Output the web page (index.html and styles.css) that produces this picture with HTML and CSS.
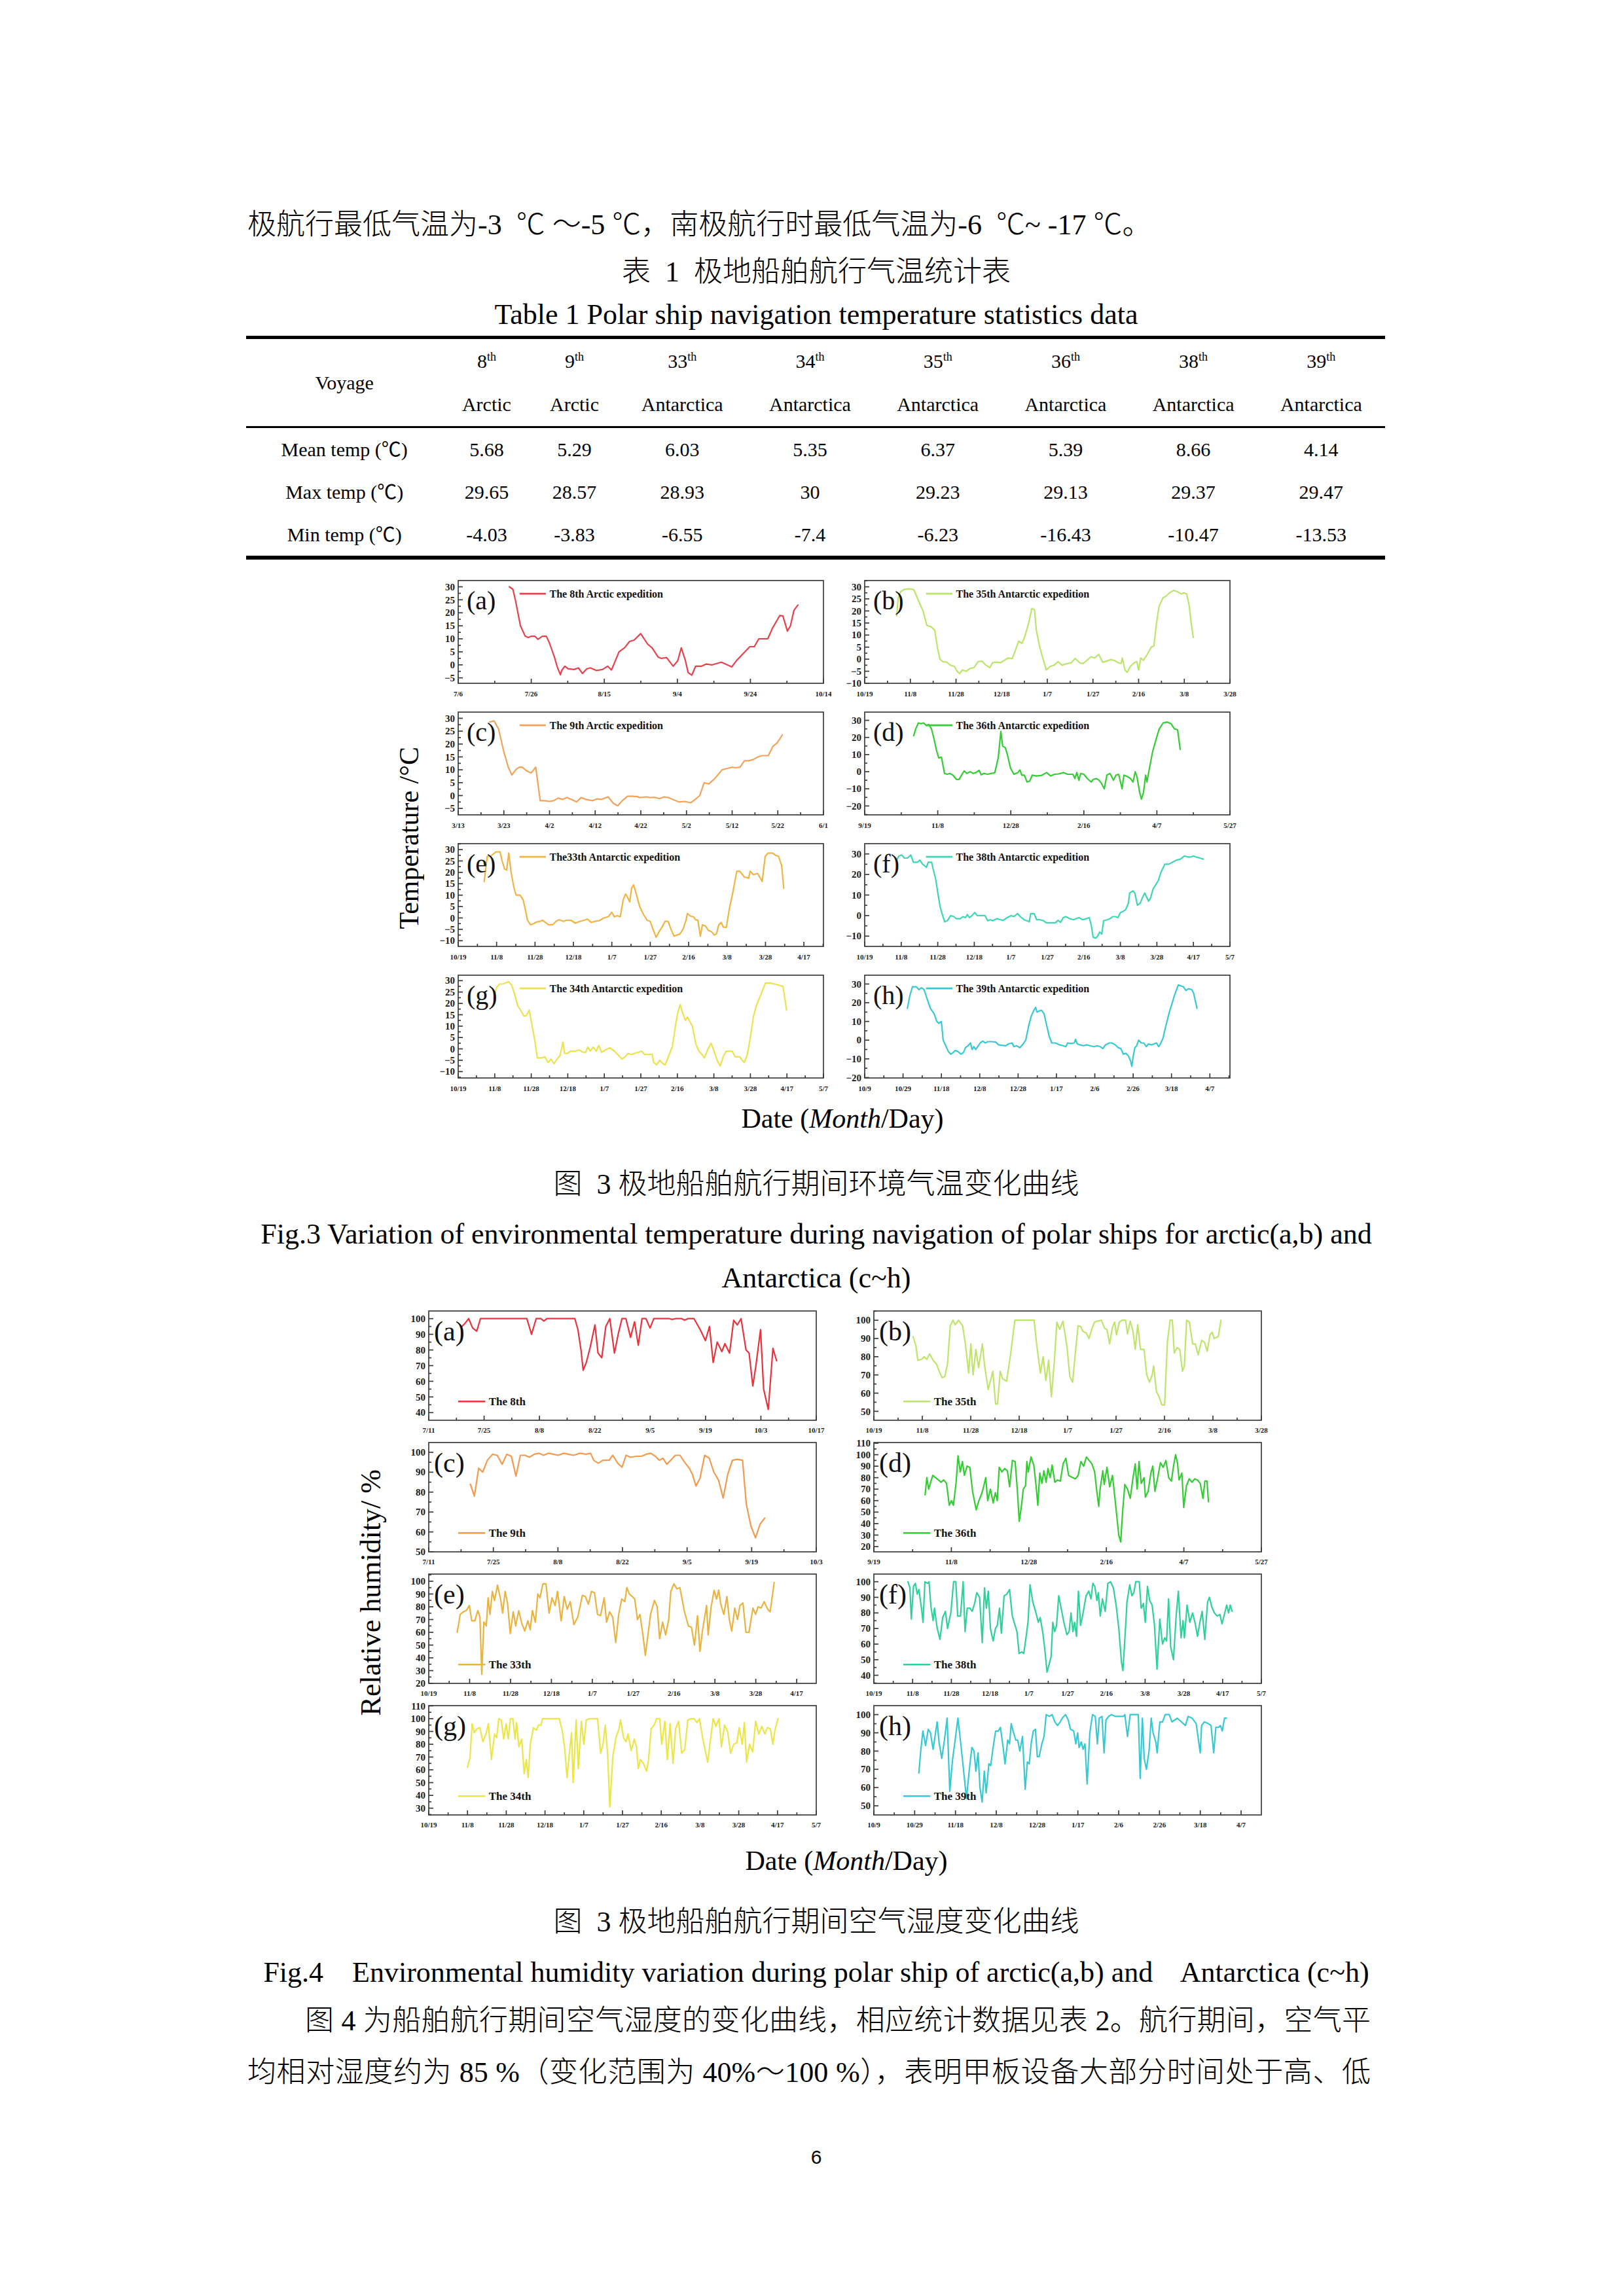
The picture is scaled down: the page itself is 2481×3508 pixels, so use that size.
FILE: index.html
```html
<!DOCTYPE html>
<html lang="zh-CN">
<head>
<meta charset="utf-8">
<title>极地船舶航行气温与湿度</title>
<link rel="stylesheet" href="styles.css">
</head>
<body>
<div class="page">
  <div class="col">
    <p class="line1">极航行最低气温为-3&nbsp;&nbsp;℃ ～-5 ℃，南极航行时最低气温为-6&nbsp;&nbsp;℃~ -17 ℃。</p>
    <p class="tbl-cn">表&nbsp;&nbsp;1&nbsp;&nbsp;极地船舶航行气温统计表</p>
    <p class="tbl-en">Table 1 Polar ship navigation temperature statistics data</p>

    <table class="stats">
      <colgroup>
        <col class="c0"><col class="cs"><col class="cs">
        <col class="cw"><col class="cw"><col class="cw"><col class="cw"><col class="cw"><col class="cw">
      </colgroup>
      <thead>
        <tr class="hr1">
          <th rowspan="2" class="voy">Voyage</th>
          <th>8<sup>th</sup></th><th>9<sup>th</sup></th><th>33<sup>th</sup></th><th>34<sup>th</sup></th>
          <th>35<sup>th</sup></th><th>36<sup>th</sup></th><th>38<sup>th</sup></th><th>39<sup>th</sup></th>
        </tr>
        <tr class="hr2">
          <th>Arctic</th><th>Arctic</th><th>Antarctica</th><th>Antarctica</th>
          <th>Antarctica</th><th>Antarctica</th><th>Antarctica</th><th>Antarctica</th>
        </tr>
      </thead>
      <tbody>
        <tr><td>Mean temp (℃)</td><td>5.68</td><td>5.29</td><td>6.03</td><td>5.35</td><td>6.37</td><td>5.39</td><td>8.66</td><td>4.14</td></tr>
        <tr><td>Max temp (℃)</td><td>29.65</td><td>28.57</td><td>28.93</td><td>30</td><td>29.23</td><td>29.13</td><td>29.37</td><td>29.47</td></tr>
        <tr><td>Min temp (℃)</td><td>-4.03</td><td>-3.83</td><td>-6.55</td><td>-7.4</td><td>-6.23</td><td>-16.43</td><td>-10.47</td><td>-13.53</td></tr>
      </tbody>
    </table>

    <div class="figure fig-temp">
      <div class="ylab"><span>Temperature /°C</span></div>
      <div class="grid grid-t">
        <div class="panel" id="t-a"></div><div class="panel" id="t-b"></div>
        <div class="panel" id="t-c"></div><div class="panel" id="t-d"></div>
        <div class="panel" id="t-e"></div><div class="panel" id="t-f"></div>
        <div class="panel" id="t-g"></div><div class="panel" id="t-h"></div>
      </div>
    </div>
    <p class="xlab xlab-t">Date (<i>Month</i>/Day)</p>
    <p class="fig-cn fig-cn-t">图&nbsp;&nbsp;3 极地船舶航行期间环境气温变化曲线</p>
    <p class="fig-en fig-en-first">Fig.3 Variation of environmental temperature during navigation of polar ships for arctic(a,b) and</p>
    <p class="fig-en">Antarctica (c~h)</p>

    <div class="figure fig-hum">
      <div class="ylab ylab-h"><span>Relative humidity/ %</span></div>
      <div class="grid grid-h">
        <div class="panel" id="h-a"></div><div class="panel" id="h-b"></div>
        <div class="panel" id="h-c"></div><div class="panel" id="h-d"></div>
        <div class="panel" id="h-e"></div><div class="panel" id="h-f"></div>
        <div class="panel" id="h-g"></div><div class="panel" id="h-h"></div>
      </div>
    </div>
    <p class="xlab xlab-h">Date (<i>Month</i>/Day)</p>
    <p class="fig-cn fig-cn-h">图&nbsp;&nbsp;3 极地船舶航行期间空气湿度变化曲线</p>
    <p class="fig-en fig-en-h">Fig.4    Environmental humidity variation during polar ship of arctic(a,b) and    Antarctica (c~h)</p>

    <p class="body-line indent">图 4 为船舶航行期间空气湿度的变化曲线，相应统计数据见表 2。航行期间，空气平</p>
    <p class="body-line">均相对湿度约为 85 %（变化范围为 40%～100 %），表明甲板设备大部分时间处于高、低</p>

    <p class="pagenum">6</p>
  </div>
</div>
<script src="script.js"></script>
</body>
</html>
```

FILE: styles.css
```css
html, body {
  margin: 0;
  padding: 0;
  background: #ffffff;
}

body {
  color: #000000;
  font-family: "Liberation Serif", "Noto Sans CJK SC", serif;
}

.page {
  width: 2481px;
  height: 3508px;
  box-sizing: border-box;
  padding: 309px 0 0 378px;
  overflow: hidden;
}

.col {
  width: 1738px;
}

.line1 {
  margin: 0;
  font-size: 44px;
  line-height: 70px;
  font-weight: 300;
  white-space: nowrap;
}

.tbl-cn {
  margin: 2px 0 0;
  font-size: 44px;
  line-height: 70px;
  font-weight: 300;
  text-align: center;
}

.tbl-en {
  margin: 0;
  font-size: 44px;
  line-height: 60px;
  text-align: center;
  white-space: nowrap;
}

/* ---------- table ---------- */
.stats {
  width: 1740px;
  margin: 2px 0 0 -2px;
  border-collapse: separate;
  border-spacing: 0;
  table-layout: fixed;
  border-top: 5px solid #000;
  border-bottom: 6px solid #000;
  font-size: 30px;
}

.stats .c0 { width: 300px; }
.stats .cs { width: 134px; }
.stats .cw { width: 195px; }

.stats th,
.stats td {
  padding: 0;
  text-align: center;
  font-weight: normal;
  white-space: nowrap;
}

.hr1 th {
  height: 67px;
  line-height: 67px;
}

.hr2 th {
  height: 66px;
  line-height: 66px;
  border-bottom: 3px solid #000;
}

.stats .voy {
  border-bottom: 3px solid #000;
  vertical-align: middle;
  line-height: 40px;
}

.stats tbody td {
  height: 65px;
  line-height: 65px;
}

.stats sup {
  font-size: 18px;
  line-height: 0;
  vertical-align: 11px;
}

/* ---------- figures ---------- */
.figure {
  display: flex;
  justify-content: center;
  align-items: center;
}

.fig-temp {
  margin-top: 24px;
}

.fig-hum {
  margin-top: 9px;
}

.ylab {
  width: 44px;
  display: flex;
  justify-content: center;
  align-items: center;
  margin-right: 3px;
}

.ylab-h {
  margin-right: 16px;
  padding-top: 72px;
}

.ylab span {
  writing-mode: vertical-rl;
  transform: rotate(180deg);
  font-size: 42px;
  line-height: 44px;
  white-space: nowrap;
}

.ylab-h span {
  font-size: 44px;
}

.grid {
  display: grid;
}

.grid-t {
  grid-template-columns: 620px 620px;
  column-gap: 1px;
  row-gap: 1px;
}

.grid-h {
  grid-template-columns: 664px 664px;
  column-gap: 16px;
  row-gap: 0;
}

.grid-t .panel { height: 200px; }
.grid-h .panel { height: 201px; }

.panel svg {
  display: block;
}

.chart text {
  font-family: "Liberation Serif", serif;
  fill: #1a1a1a;
}

.chart .yt { font-weight: bold; font-size: 15px; }
.chart .xt { font-weight: bold; font-size: 11px; }
.chart .legend { font-weight: bold; font-size: 16px; fill: #111; }
.chart .letter { font-size: 40px; fill: #111; }
.grid-h .chart .legend { font-size: 17px; }
.grid-h .chart .letter { font-size: 42px; }

.xlab {
  margin: 2px 0 0;
  font-size: 42px;
  line-height: 50px;
  text-align: center;
  padding-left: 80px;
}

.xlab-h {
  margin-top: 19px;
  padding-left: 92px;
}

.fig-cn {
  margin: 41px 0 0;
  font-size: 44px;
  line-height: 70px;
  font-weight: 300;
  text-align: center;
}

.fig-cn-h {
  margin-top: 34px;
}

.fig-en {
  margin: 0;
  font-size: 44px;
  line-height: 67px;
  text-align: center;
  white-space: pre;
}

.fig-en-first {
  margin-top: 7px;
}

.fig-en-h {
  margin-top: 8px;
}

.body-line {
  width: 1716px;
  margin: 0;
  font-size: 44px;
  line-height: 79px;
  font-weight: 300;
  text-align: justify;
  text-align-last: justify;
}

.fig-en-h + .body-line {
  margin-top: 1px;
}

.indent {
  text-indent: 2em;
}

.pagenum {
  margin: 65px 0 0;
  font-family: "Liberation Sans", sans-serif;
  font-size: 30px;
  line-height: 50px;
  text-align: center;
}
```

FILE: script.js
```js
(function () {
  var NS = 'http://www.w3.org/2000/svg';

  function mk(tag, attrs, text) {
    var e = document.createElementNS(NS, tag);
    for (var k in attrs) e.setAttribute(k, attrs[k]);
    if (text != null) e.textContent = text;
    return e;
  }

  var GT = { W: 620, H: 200, ML: 50, MT: 8, PW: 558, PH: 157, ylf: 15, legY: 0.128, legX: [0.168, 0.24, 0.25], legF: 16, letX: 13, letY: 44, xlDy: 20 };
  var GH = { W: 664, H: 201, ML: 50, MT: 8, PW: 592, PH: 167, ylf: 15, legY: 0.828, legX: [0.076, 0.146, 0.155], legF: 17, letX: 8, letY: 45, xlDy: 19 };

  function fmt(v) { return v < 0 ? '\u2212' + (-v) : String(v); }

  function draw(id, g, c) {
    var host = document.getElementById(id);
    if (!host) return;
    var svg = mk('svg', { width: g.W, height: g.H, viewBox: '0 0 ' + g.W + ' ' + g.H, 'class': 'chart' });
    function X(f) { return g.ML + f * g.PW; }
    function Y(v) { return g.MT + (c.yMax - v) / (c.yMax - c.yMin) * g.PH; }
    var B = g.MT + g.PH;

    var ax = mk('g', { stroke: '#3a3a3a', 'stroke-width': 1.7, fill: 'none' });
    var t = c.yt, step = t[0] - t[1], i, v, f, x, y;
    t.forEach(function (v) { var y = Y(v); ax.appendChild(mk('line', { x1: g.ML, x2: g.ML + 7, y1: y, y2: y })); });
    for (v = t[t.length - 1] - step / 2; v < c.yMax; v += step) {
      if (v > c.yMin) { y = Y(v); ax.appendChild(mk('line', { x1: g.ML, x2: g.ML + 4, y1: y, y2: y })); }
    }
    for (i = 0; i < c.xl.length; i++) {
      x = X(i * c.xs);
      ax.appendChild(mk('line', { x1: x, x2: x, y1: B, y2: B - 7 }));
    }
    for (f = c.xs / 2; f < 1.0001; f += c.xs) {
      x = X(Math.min(f, 1));
      ax.appendChild(mk('line', { x1: x, x2: x, y1: B, y2: B - 4 }));
    }
    ax.appendChild(mk('rect', { x: g.ML, y: g.MT, width: g.PW, height: g.PH }));
    svg.appendChild(ax);

    var lab = mk('g', {});
    t.forEach(function (v) {
      lab.appendChild(mk('text', { x: g.ML - 5, y: (Y(v) + g.ylf * 0.34).toFixed(1), 'text-anchor': 'end', 'class': 'yt' }, fmt(v)));
    });
    c.xl.forEach(function (s, i) {
      lab.appendChild(mk('text', { x: X(i * c.xs).toFixed(1), y: B + g.xlDy, 'text-anchor': 'middle', 'class': 'xt' }, s));
    });
    svg.appendChild(lab);

    var d = c.d, bx = c.bx, pts = [];
    for (i = 0; i < d.length; i += 2) {
      pts.push(X((d[i] - bx[0]) / (bx[1] - bx[0])).toFixed(1) + ',' + Y(d[i + 1]).toFixed(1));
    }
    svg.appendChild(mk('polyline', { points: pts.join(' '), fill: 'none', stroke: c.col, 'stroke-width': 2.2, 'stroke-linejoin': 'round', 'stroke-linecap': 'round' }));

    var ly = g.MT + g.legY * g.PH;
    svg.appendChild(mk('line', { x1: X(g.legX[0]), x2: X(g.legX[1]), y1: ly, y2: ly, stroke: c.col, 'stroke-width': 2.6 }));
    svg.appendChild(mk('text', { x: X(g.legX[2]), y: (ly + g.legF * 0.34).toFixed(1), 'class': 'legend' }, c.leg));
    svg.appendChild(mk('text', { x: g.ML + g.letX, y: g.MT + g.letY, 'class': 'letter' }, c.let));
    host.appendChild(svg);
  }

  var L19_37 = ['10/19', '11/8', '11/28', '12/18', '1/7', '1/27', '2/16', '3/8', '3/28'];
  var L19_57 = ['10/19', '11/8', '11/28', '12/18', '1/7', '1/27', '2/16', '3/8', '3/28', '4/17', '5/7'];
  var L19_417 = ['10/19', '11/8', '11/28', '12/18', '1/7', '1/27', '2/16', '3/8', '3/28', '4/17'];
  var L109 = ['10/9', '10/29', '11/18', '12/8', '12/28', '1/17', '2/6', '2/26', '3/18', '4/7'];
  var T5 = [30, 25, 20, 15, 10, 5, 0, -5];
  var T10 = [30, 25, 20, 15, 10, 5, 0, -5, -10];

  /* ---------------- temperature ---------------- */
  draw('t-a', GT, {
    yMin: -7.1, yMax: 32.4, yt: T5, bx: [255, 1470], xs: 0.2,
    xl: ['7/6', '7/26', '8/15', '9/4', '9/24', '10/14'], col: '#e8414b',
    leg: 'The 8th Arctic expedition', let: '(a)',
    d: [425,30, 437,29, 445,25, 462,15, 478,11, 488,10.5, 498,11, 510,11, 520,9.8, 535,11, 548,11, 558,8.5, 575,3, 585,-1, 595,-3.8, 600,-2, 610,-0.5, 620,-1.5, 640,-1.8, 655,-1.2, 668,-3.3, 683,-1.5, 695,-1.2, 715,-2.2, 735,-1.8, 752,-0.5, 765,-2, 790,5, 808,6.5, 825,9, 840,9.5, 862,12, 885,8, 900,6.5, 920,3, 930,2.5, 948,2.8, 970,-0.5, 985,1.5, 997,6.5, 1010,2, 1020,-3, 1032,-4, 1045,-0.5, 1065,-0.5, 1080,0.3, 1100,0, 1130,1, 1150,0, 1165,-0.8, 1180,1.5, 1200,4, 1225,7, 1240,7, 1255,10, 1270,10, 1285,10, 1300,14, 1325,19, 1335,18.8, 1350,13, 1360,15, 1372,21, 1385,23]
  });

  draw('t-b', GT, {
    yMin: -10, yMax: 32.6, yt: T10, bx: [68, 1460], xs: 0.125,
    xl: L19_37, col: '#bde46a',
    leg: 'The 35th Antarctic expedition', let: '(b)',
    d: [190,18, 195,25, 205,28, 220,29, 240,29.2, 255,28.8, 270,25, 290,20, 305,14, 320,13.5, 335,12, 345,5, 355,0, 365,-1, 380,-1.2, 395,-2.5, 410,-3, 420,-5, 430,-6, 440,-4.5, 455,-5, 470,-3.8, 485,-3.5, 500,-1, 515,-0.8, 530,-2.5, 545,-3.5, 555,-1.5, 570,-1.2, 585,-1.5, 600,-0.5, 615,0.5, 630,0.3, 640,3, 655,7.5, 668,6.5, 680,10, 693,15, 705,21, 715,20.5, 722,12, 735,5, 748,0, 760,-4.5, 775,-3, 790,-2.5, 805,-1, 820,-2.5, 840,-1.8, 855,-1.5, 870,0.3, 888,-1.5, 900,-1.8, 915,-0.5, 930,1, 945,0.5, 960,2, 975,-1.3, 990,-0.8, 1005,-0.2, 1020,-0.5, 1035,-1.5, 1045,-1.8, 1050,0.5, 1060,-4.5, 1068,-5.5, 1080,-3, 1095,-1.5, 1105,-1, 1112,-4.5, 1120,0.5, 1130,-0.5, 1145,2, 1160,5, 1170,5.5, 1180,15, 1190,22, 1205,25.5, 1215,26, 1230,27.5, 1245,28.5, 1260,28, 1275,27, 1285,27.5, 1295,27, 1305,22, 1312,15, 1320,9]
  });

  draw('t-c', GT, {
    yMin: -7.5, yMax: 32.4, yt: T5, bx: [240, 1465], xs: 0.125,
    xl: ['3/13', '3/23', '4/2', '4/12', '4/22', '5/2', '5/12', '5/22', '6/1'], col: '#f3a25a',
    leg: 'The 9th Arctic expedition', let: '(c)',
    d: [345,28.5, 360,29, 375,26, 393,17, 408,11, 420,8, 433,10, 445,11, 455,11, 470,9.5, 485,8.8, 500,11, 515,-2, 530,-2, 545,-2.3, 560,-2, 575,-1, 590,-1.5, 605,-0.8, 620,-1.5, 637,-2.5, 652,-0.8, 668,-1.5, 690,-2, 705,-1.3, 720,-1.5, 743,-0.5, 760,-3, 775,-4, 790,-2, 808,-0.3, 825,-0.3, 840,-0.4, 850,-0.8, 870,-0.5, 885,-0.8, 900,-0.7, 915,-1.2, 930,-0.5, 945,-0.8, 960,-1.5, 980,-2.5, 1000,-2.3, 1020,-2.8, 1035,-1.5, 1050,0, 1065,5, 1080,4.5, 1100,6.5, 1125,10, 1140,10.5, 1158,11, 1170,10.8, 1185,11, 1200,13.5, 1215,13.5, 1230,14, 1245,15, 1260,15.5, 1280,15.5, 1295,19, 1310,20.5, 1327,23.5]
  });

  draw('t-d', GT, {
    yMin: -25.2, yMax: 34.8, yt: [30, 20, 10, 0, -10, -20], bx: [75, 1470], xs: 0.2,
    xl: ['9/19', '11/8', '12/28', '2/16', '4/7', '5/27'], col: '#34cc34',
    leg: 'The 36th Antarctic expedition', let: '(d)',
    d: [262,21, 270,25, 280,28.5, 290,28, 300,28.5, 310,27, 320,27.5, 330,25, 340,19, 350,12, 358,8, 368,8.5, 380,-1, 390,-1.5, 400,-1, 412,-2, 425,-4.5, 435,-4.5, 445,-2, 455,0.5, 465,-1, 478,0, 490,-1, 500,-0.5, 512,0.8, 520,-1.8, 530,-1, 545,-1.5, 560,-1, 572,-0.5, 585,8, 595,23.5, 602,15, 612,14, 620,10, 632,2, 645,-1.5, 660,-0.5, 668,1, 675,-2, 685,-2, 695,-6, 705,-5.5, 715,-2, 730,-2.5, 750,-2.2, 770,-0.5, 785,-2.5, 800,-1.5, 815,-1.3, 835,-0.5, 850,-1.5, 870,-1.5, 878,-4, 885,-0.5, 893,-5, 900,-1, 912,-1.5, 925,-4, 940,-6, 948,-4.5, 960,-4, 970,-5, 980,-7, 990,-10, 1000,-2, 1012,-1, 1025,-5, 1035,-2, 1045,-1.5, 1058,-10, 1065,-2, 1080,-3, 1090,-4, 1100,-6, 1108,0, 1115,-3, 1125,-12, 1132,-16, 1140,-12, 1148,-2, 1153,-6, 1160,0, 1175,12, 1190,20, 1200,25, 1215,28.5, 1230,29, 1245,28, 1258,25, 1270,24.5, 1280,13]
  });

  draw('t-e', GT, {
    yMin: -12.5, yMax: 32.6, yt: T10, bx: [238, 1460], xs: 0.10516,
    xl: L19_417, col: '#f0b444',
    leg: 'The33th Antarctic expedition', let: '(e)',
    d: [325,16, 335,27, 345,27, 355,28, 365,29, 378,29, 385,25, 393,21.5, 400,21, 407,28.5, 415,20, 425,13, 432,10, 445,10, 455,8, 462,4, 470,-1, 480,-3, 490,-2.5, 500,-1.8, 512,-1.5, 520,-1, 530,-2, 540,-3, 555,-3, 565,-1.5, 575,-0.8, 590,-1.5, 600,-1, 615,-1, 630,-2.3, 645,-1.5, 660,-1, 670,-0.5, 683,-2, 695,-1.5, 710,-1.2, 725,0, 740,0.5, 752,2.5, 760,0.5, 770,1, 780,0.5, 790,8, 798,10.5, 805,9, 812,7, 818,13, 825,14.5, 835,10, 845,5, 858,1.5, 870,-1, 880,-1.5, 890,-5, 900,-8.5, 910,-6, 920,-4, 930,-1.5, 940,-1.5, 950,-5, 960,-8, 970,-7.5, 980,-7, 990,-5, 1000,-1, 1005,2, 1015,0.8, 1025,0.5, 1032,-0.8, 1040,-1, 1048,-8, 1055,-3, 1065,-3.5, 1075,-5.5, 1085,-6, 1095,-7.5, 1102,-7, 1110,-3, 1118,-2, 1125,-4, 1135,-4.2, 1145,4, 1155,10, 1170,20.5, 1180,20.5, 1195,18, 1210,17.5, 1215,20.5, 1225,19, 1240,19.5, 1255,16, 1265,27, 1275,28.5, 1290,28.5, 1300,27.5, 1310,27, 1320,23, 1327,13]
  });

  draw('t-f', GT, {
    yMin: -15, yMax: 35, yt: [30, 20, 10, 0, -10], bx: [68, 1470], xs: 0.1,
    xl: L19_57, col: '#3cd6b4',
    leg: 'The 38th Antarctic expedition', let: '(f)',
    d: [190,27, 200,29, 210,29.5, 220,28, 232,28, 245,29.5, 255,26, 270,26, 280,27, 290,25, 300,24, 305,23.5, 312,26, 325,26, 330,23, 340,18, 350,10, 358,4, 365,1, 375,-3, 385,-2.5, 398,0, 410,-0.5, 420,-1.5, 435,-1.5, 445,-0.5, 455,-1, 462,0.5, 470,-1, 480,0, 490,1.5, 500,0, 515,0, 530,0, 540,-2.5, 550,-2, 560,-2.5, 575,-1.5, 590,-2, 600,-2.3, 615,-1, 630,0, 640,-0.5, 655,1, 665,-0.5, 680,-2, 700,-3, 705,1, 718,1, 728,-2, 740,-2, 755,-2.5, 765,-3.5, 780,-3.5, 800,-3.5, 810,-2.3, 820,-3.3, 830,-1, 840,-0.5, 855,-1.5, 870,-2, 880,-1.5, 890,-1, 905,-2, 918,-1.5, 930,-1, 938,-5, 945,-10.5, 955,-11, 962,-10, 970,-8, 978,-9, 985,-2.5, 1000,-2, 1010,-1.5, 1020,-0.5, 1030,-0.5, 1040,-1, 1050,1.5, 1060,2, 1070,3, 1080,6, 1085,11, 1098,12, 1105,11, 1115,5, 1125,6, 1135,9, 1143,11, 1150,9, 1158,7, 1165,8.5, 1175,13, 1185,15, 1195,17, 1205,21, 1220,25, 1235,25, 1250,26, 1265,27, 1280,27.5, 1295,29, 1310,28.5, 1320,28.5, 1330,29, 1340,28.5, 1355,28, 1368,27.5]
  });

  draw('t-g', GT, {
    yMin: -12.8, yMax: 32.4, yt: T10, bx: [253, 1462], xs: 0.1,
    xl: L19_57, col: '#ece24e',
    leg: 'The 34th Antarctic expedition', let: '(g)',
    d: [370,22, 380,27, 390,28.5, 400,28.5, 410,29, 420,29.5, 430,28, 440,24, 450,19, 460,17, 470,14.5, 478,14.5, 488,17, 495,12, 505,5, 515,-4, 530,-4, 540,-3.5, 550,-6, 560,-4.5, 570,-6.5, 580,-4.5, 590,-3, 600,3, 605,-2, 615,-2, 625,-1, 640,-1, 655,-0.5, 665,-1.5, 675,-1.5, 682,0.8, 690,-1, 700,0.8, 710,-1, 718,1.5, 728,-1.5, 740,-0.5, 755,0.5, 770,-1, 785,-3, 795,-4.5, 805,-3.5, 815,-2, 828,-2.5, 840,-1.8, 850,-1.5, 860,-1, 870,-2.5, 885,-2.5, 895,-2.3, 900,-6, 910,-7, 920,-5, 930,-6.5, 938,-7, 950,-3, 962,1, 972,10, 980,16, 988,19.5, 995,16, 1005,12.5, 1012,14, 1020,12, 1028,10, 1040,2, 1050,-1, 1060,-2.5, 1068,-4, 1080,0, 1090,2.5, 1100,-1, 1110,-5, 1120,-7.5, 1130,-3.5, 1140,-1, 1150,-1, 1160,-1, 1170,-3.5, 1185,-3.5, 1190,-4.5, 1200,-6, 1210,-2.5, 1220,5, 1230,14, 1240,19, 1255,24, 1270,29, 1285,29, 1300,28.5, 1315,28, 1328,27.5, 1340,17]
  });

  draw('t-h', GT, {
    yMin: -20.2, yMax: 34.7, yt: [30, 20, 10, 0, -10, -20], bx: [68, 1497], xs: 0.105,
    xl: L109, col: '#36c9d3',
    leg: 'The 39th Antarctic expedition', let: '(h)',
    d: [235,17, 245,24, 255,28.5, 270,28.5, 280,27, 290,28, 300,27, 310,23, 325,17, 340,14, 350,10, 358,9, 368,10, 375,0, 385,-3, 395,-6, 405,-7.5, 415,-6.5, 422,-5.5, 432,-6, 445,-7.5, 455,-6.5, 462,-4, 472,-3, 482,-1.5, 488,-5, 495,-3.5, 502,-5, 510,-3.5, 520,-1.5, 530,-0.5, 540,-1.5, 550,-0.8, 565,-0.8, 580,-1, 592,-2.5, 605,-2.8, 620,-3, 630,-2, 645,-1.5, 652,-3.5, 662,-3, 675,-4, 688,-2, 698,0, 710,8, 720,13, 730,16, 737,17.5, 742,15, 750,15.5, 760,16, 770,14, 780,8, 790,2, 800,-1.5, 815,-1.5, 830,-2.5, 845,-3, 855,-3.5, 862,-1.5, 875,-1.8, 888,-1.5, 893,0.5, 900,-2, 910,-2.5, 925,-3, 935,-2.5, 950,-3, 965,-3.5, 978,-3, 990,-3.5, 1000,-4.5, 1010,-2.5, 1025,-1.5, 1035,-1.5, 1048,-2.5, 1060,-4, 1070,-4.5, 1080,-7.5, 1090,-7, 1100,-8.5, 1108,-11, 1113,-14, 1118,-9, 1125,-4, 1132,-3, 1140,0, 1150,-1.5, 1160,-1.5, 1170,-3.5, 1178,-2, 1190,-2.5, 1200,-2, 1210,-1.5, 1218,-3.5, 1225,-2, 1235,1, 1245,7, 1260,15, 1280,24, 1295,29.5, 1305,29, 1315,28.5, 1325,26.5, 1335,27.5, 1348,27, 1355,25, 1368,17]
  });

  /* ---------------- humidity ---------------- */
  draw('h-a', GH, {
    yMin: 35.1, yMax: 104.9, yt: [100, 90, 80, 70, 60, 50, 40], bx: [243, 1495], xs: 1 / 7,
    xl: ['7/11', '7/25', '8/8', '8/22', '9/5', '9/19', '10/3', '10/17'], col: '#e8333d',
    leg: 'The 8th', let: '(a)',
    d: [350,95, 360,97, 372,100, 385,94, 398,92, 410,100, 420,100, 560,100, 575,90, 590,100, 605,100, 615,98.5, 625,100, 715,100, 725,93, 735,80, 742,67, 752,72, 765,82, 780,96, 790,78, 802,75, 815,95, 828,100, 843,78, 855,90, 867,100, 880,100, 895,88, 908,98, 920,83, 932,100, 945,100, 958,94, 970,100, 1020,100, 1030,99.5, 1040,100, 1060,100, 1070,99, 1080,100, 1100,100, 1120,93, 1137,86, 1150,95, 1162,72, 1175,85, 1190,79, 1200,84, 1215,78, 1228,99, 1240,96, 1252,100, 1268,80, 1278,78, 1290,57, 1300,70, 1315,93, 1325,55, 1340,42, 1355,81, 1367,73]
  });

  draw('h-b', GH, {
    yMin: 45.1, yMax: 105.1, yt: [100, 90, 80, 70, 60, 50], bx: [102, 1512], xs: 0.125,
    xl: L19_37, col: '#bfe46c',
    leg: 'The 35th', let: '(b)',
    d: [245,91, 255,86, 262,78, 275,78.5, 285,80, 295,78.5, 305,81.5, 318,78, 330,76, 340,72, 350,68.5, 360,69, 370,76, 380,97, 390,100, 398,97.5, 410,100, 425,97, 435,87, 447,71, 455,87, 463,70, 473,84, 483,74, 497,87, 505,75, 518,62, 530,69, 535,72, 545,54, 552,54, 562,72, 570,68, 585,66.5, 600,82, 615,100, 625,100, 685,100, 695,86, 708,71, 718,80, 728,67, 738,78, 748,58, 758,76, 768,99, 778,95, 790,99.5, 805,85, 815,69, 825,66, 835,82, 845,97, 855,96.5, 862,94, 875,93, 885,90, 895,95, 905,99, 915,99.5, 930,100, 942,95.5, 950,95, 960,87, 970,96, 978,99, 985,92, 995,99, 1005,100, 1018,100, 1025,92.5, 1035,99.5, 1045,94, 1053,84, 1062,97.5, 1072,84, 1085,84, 1095,70, 1105,66, 1115,70, 1120,75, 1130,61, 1140,58, 1150,53.5, 1160,53.5, 1170,88, 1180,100, 1188,100, 1195,82, 1205,85, 1215,84, 1225,72, 1232,75, 1240,100, 1250,99, 1262,87, 1272,87, 1282,81, 1295,89, 1305,88, 1315,83, 1325,92, 1333,93.5, 1340,90, 1355,91, 1365,100]
  });

  draw('h-c', GH, {
    yMin: 50, yMax: 104.9, yt: [100, 90, 80, 70, 60, 50], bx: [240, 1497], xs: 1 / 6,
    xl: ['7/11', '7/25', '8/8', '8/22', '9/5', '9/19', '10/3'], col: '#f39a4f',
    leg: 'The 9th', let: '(c)',
    d: [375,84, 388,78, 402,92, 415,90, 430,96, 447,99, 462,98.5, 478,94, 493,99, 508,98, 523,88, 537,98.5, 552,98.5, 567,97.5, 582,99, 598,99.5, 612,98.5, 628,99.5, 645,99, 660,98.5, 678,99.5, 693,99, 710,98.5, 730,99.5, 750,99, 765,99.5, 775,96, 790,94.5, 805,96, 825,96, 837,98.5, 853,94.5, 867,92.5, 880,98.5, 895,97.5, 912,98, 930,98, 945,99, 960,99.5, 975,98, 988,96, 1000,97, 1012,94, 1025,96, 1040,98.5, 1055,98.5, 1070,95, 1085,92, 1095,89, 1107,83, 1120,87, 1135,98.5, 1150,97, 1165,90, 1180,86, 1195,77, 1210,89, 1225,96, 1240,96.5, 1258,96, 1270,74, 1285,63, 1300,57, 1315,64, 1330,67]
  });

  draw('h-d', GH, {
    yMin: 15.4, yMax: 110.6, yt: [110, 100, 90, 80, 70, 60, 50, 40, 30, 20], bx: [105, 1518], xs: 0.2,
    xl: ['9/19', '11/8', '12/28', '2/16', '4/7', '5/27'], col: '#33cc33',
    leg: 'The 36th', let: '(d)',
    d: [292,65, 298,80, 305,70, 312,76, 320,82, 330,80, 340,78, 350,76, 360,78, 370,75, 380,56, 388,60, 395,56, 405,76, 412,99, 420,85, 428,94, 435,82, 445,90, 455,89, 465,68, 478,52, 488,60, 498,66, 505,72, 513,80, 520,60, 530,70, 540,58, 548,67, 555,60, 562,89, 572,85, 582,88, 592,86, 600,72, 610,95, 620,94, 628,70, 635,42, 643,55, 650,70, 658,73, 663,94, 668,85, 678,98, 688,91, 697,72, 703,56, 710,84, 718,75, 725,86, 733,76, 740,88, 748,80, 755,91, 765,76, 775,78, 785,77, 795,92, 805,97, 815,82, 830,80, 840,79, 850,82, 860,94, 870,90, 880,98, 890,95, 900,92, 910,85, 918,68, 925,55, 930,70, 940,86, 945,74, 955,89, 965,72, 975,82, 985,60, 998,30, 1005,24, 1012,50, 1020,74, 1030,70, 1040,62, 1050,80, 1058,92, 1065,70, 1072,94, 1080,75, 1090,80, 1095,63, 1105,68, 1115,84, 1122,90, 1130,68, 1140,80, 1150,93, 1160,89, 1170,95, 1180,80, 1190,77, 1197,89, 1205,100, 1212,93, 1218,78, 1228,84, 1235,54, 1245,73, 1255,79, 1265,76, 1275,79, 1285,78, 1295,75, 1305,62, 1312,77, 1320,77, 1325,59]
  });

  draw('h-e', GH, {
    yMin: 20, yMax: 105.6, yt: [100, 90, 80, 70, 60, 50, 40, 30, 20], bx: [218, 1497], xs: 0.1055,
    xl: L19_417, col: '#eab23e',
    leg: 'The 33th', let: '(e)',
    d: [312,60, 322,74, 332,76, 342,77, 352,81, 360,69, 370,69, 380,77, 387,72, 393,27, 400,68, 408,65, 414,87, 420,74, 428,92, 435,85, 445,97, 455,86, 462,75, 470,92, 478,83, 487,59, 497,76, 505,65, 515,77, 525,67, 535,61, 545,69, 553,62, 560,77, 570,68, 578,90, 585,87, 595,98, 605,98, 615,75, 625,87, 635,81, 643,92, 655,69, 665,88, 675,78, 685,84, 697,66, 710,72, 725,89, 735,88, 745,82, 755,92, 765,91, 775,74, 785,73, 797,87, 805,68, 815,76, 825,72, 835,52, 845,74, 855,86, 865,84, 872,95, 880,90, 890,88, 898,86, 907,70, 915,74, 925,58, 933,42, 940,55, 950,74, 963,85, 972,80, 980,55, 990,68, 1000,58, 1010,70, 1017,92, 1027,98, 1037,94, 1047,95, 1055,85, 1062,76, 1075,65, 1085,64, 1095,50, 1105,73, 1113,45, 1122,62, 1135,81, 1140,58, 1150,80, 1160,93, 1168,86, 1175,93, 1182,82, 1192,74, 1202,88, 1210,70, 1218,61, 1228,79, 1237,70, 1245,81, 1255,83, 1265,60, 1275,60, 1288,79, 1297,74, 1305,80, 1315,79, 1325,84, 1337,78, 1345,76, 1358,99]
  });

  draw('h-f', GH, {
    yMin: 34.8, yMax: 104.9, yt: [100, 90, 80, 70, 60, 50, 40], bx: [103, 1522], xs: 0.1,
    xl: L19_57, col: '#2fd09c',
    leg: 'The 38th', let: '(f)',
    d: [228,100, 235,96, 240,76, 248,97, 255,99, 262,92, 268,95, 278,82, 283,74, 290,100, 300,99, 305,100, 312,84, 320,75, 325,83, 335,70, 345,63, 355,77, 365,81, 373,70, 385,80, 395,100, 403,100, 410,78, 420,78, 430,100, 437,68, 445,83, 455,83, 463,81, 472,86, 480,93, 490,90, 500,61, 508,96, 515,83, 522,94, 530,70, 540,62, 548,70, 555,72, 563,83, 570,67, 580,91, 590,92, 600,95, 610,78, 620,72, 627,68, 635,54, 645,55, 652,54, 660,64, 668,75, 675,98, 685,87, 695,81, 705,74, 712,77, 722,67, 730,55, 737,42, 745,47, 752,52, 758,74, 765,68, 772,72, 780,91, 790,82, 800,73, 810,66, 818,68, 825,80, 832,68, 838,74, 845,65, 852,94, 860,72, 868,79, 880,91, 890,94, 898,89, 905,99, 912,97, 920,88, 925,93, 932,78, 940,89, 950,81, 960,99, 970,100, 980,96, 990,85, 1000,70, 1010,48, 1015,43, 1025,72, 1030,87, 1040,98, 1048,91, 1055,93, 1062,100, 1075,100, 1082,83, 1090,86, 1097,74, 1105,97, 1113,88, 1122,85, 1130,73, 1140,44, 1150,76, 1160,60, 1168,64, 1175,62, 1182,89, 1190,58, 1200,50, 1210,78, 1218,94, 1228,64, 1235,75, 1240,64, 1250,85, 1260,74, 1270,80, 1280,73, 1288,65, 1298,75, 1305,81, 1315,63, 1325,87, 1332,90, 1340,84, 1350,80, 1360,78, 1370,79, 1378,73, 1388,80, 1395,85, 1402,80, 1408,85, 1415,81]
  });

  draw('h-g', GH, {
    yMin: 24.7, yMax: 110.2, yt: [110, 100, 90, 80, 70, 60, 50, 40, 30], bx: [233, 1500], xs: 0.1,
    xl: L19_57, col: '#ece548',
    leg: 'The 34th', let: '(g)',
    d: [360,62, 368,70, 375,96, 382,89, 390,92, 400,93, 410,82, 420,88, 428,96, 438,68, 448,88, 455,85, 462,100, 470,99, 478,84, 486,96, 493,84, 500,100, 508,100, 515,84, 520,97, 528,78, 537,84, 545,57, 552,68, 558,54, 565,80, 575,93, 585,91, 592,95, 600,95, 605,100, 660,100, 670,90, 678,76, 685,54, 695,78, 700,89, 705,50, 715,99, 722,61, 732,98, 740,80, 748,99, 758,100, 785,100, 795,73, 803,80, 810,95, 818,72, 825,31, 835,71, 845,85, 855,92, 860,99, 870,85, 878,82, 885,88, 895,75, 905,84, 912,78, 918,61, 925,68, 935,65, 945,59, 952,68, 960,92, 970,95, 978,100, 988,100, 995,80, 1005,98, 1013,68, 1022,96, 1032,65, 1040,92, 1050,98, 1060,73, 1070,76, 1080,99, 1090,100, 1100,100, 1110,97, 1118,100, 1130,83, 1145,66, 1155,85, 1163,100, 1172,94, 1182,100, 1190,78, 1200,95, 1210,90, 1220,73, 1230,80, 1240,81, 1248,93, 1258,80, 1265,97, 1272,66, 1282,80, 1292,74, 1302,98, 1312,88, 1322,94, 1332,88, 1340,93, 1350,92, 1358,80, 1365,91, 1375,100]
  });

  draw('h-h', GH, {
    yMin: 45, yMax: 104.9, yt: [100, 90, 80, 70, 60, 50], bx: [88, 1527], xs: 0.1053,
    xl: L109, col: '#35c9d3',
    leg: 'The 39th', let: '(h)',
    d: [255,68, 262,80, 270,91, 280,83, 290,92, 298,90, 308,81, 315,88, 323,96, 330,85, 340,76, 350,86, 360,98, 370,58, 380,75, 390,86, 400,98, 410,85, 420,71, 432,54, 442,69, 452,82, 460,80, 467,69, 475,79, 482,60, 490,52, 498,69, 505,57, 515,73, 522,72, 530,81, 540,91, 550,91, 558,93, 568,82, 575,73, 585,86, 592,84, 598,95, 605,91, 615,86, 622,86, 630,80, 640,88, 650,59, 658,74, 665,73, 672,84, 680,91, 688,92, 695,77, 702,77, 712,84, 720,88, 728,100, 740,99, 750,100, 760,96, 770,94, 780,96, 790,98.5, 800,100, 810,97, 818,92, 830,91, 838,84, 845,90, 850,82, 858,85, 865,81, 872,84, 880,62, 890,90, 900,100, 910,99, 918,84, 925,98, 935,99, 943,79, 950,97, 960,99, 970,100, 985,99, 1000,99, 1015,99, 1020,100, 1030,88, 1040,100, 1070,100, 1077,65, 1085,98, 1092,76, 1100,70, 1110,80, 1118,98, 1125,90, 1135,85, 1140,79, 1150,96, 1160,96, 1170,100, 1185,100, 1195,96, 1205,97, 1215,98, 1230,96, 1245,94, 1255,99, 1270,98, 1285,95, 1300,79, 1305,94, 1315,96, 1330,95, 1340,94, 1350,79, 1358,93, 1368,93, 1375,94, 1382,91, 1390,98, 1397,98]
  });
})();
```
